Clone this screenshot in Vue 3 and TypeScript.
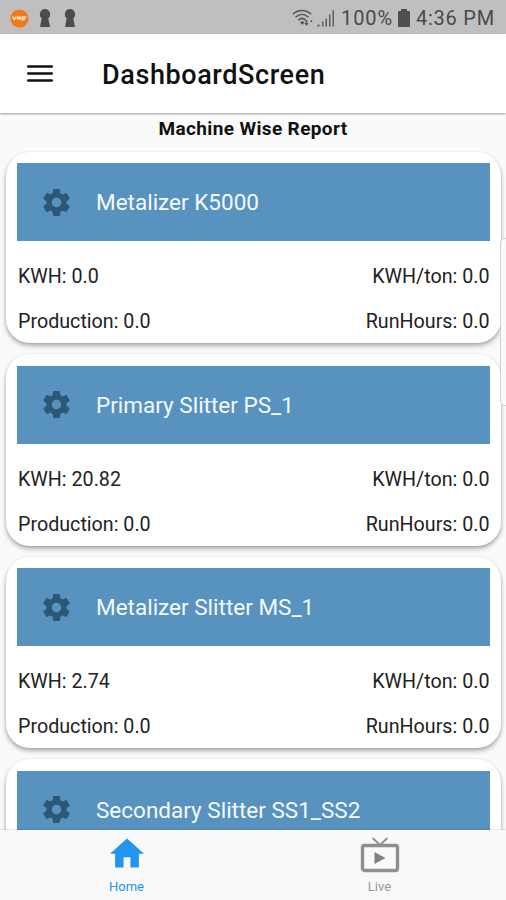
<script setup lang="ts">
interface Readings {
  kwh: string
  perTon: string
  production: string
  runHours: string
}

interface Machine {
  name: string
  readings?: Readings
}

const machines: Machine[] = [
  { name: 'Metalizer K5000', readings: { kwh: '0.0', perTon: '0.0', production: '0.0', runHours: '0.0' } },
  { name: 'Primary Slitter PS_1', readings: { kwh: '20.82', perTon: '0.0', production: '0.0', runHours: '0.0' } },
  { name: 'Metalizer Slitter MS_1', readings: { kwh: '2.74', perTon: '0.0', production: '0.0', runHours: '0.0' } },
  { name: 'Secondary Slitter SS1_SS2' },
]
</script>

<template>
  <div class="screen">
    <div class="status">
      <div class="notices">
        <svg class="vip" viewBox="0 0 20 20">
          <circle cx="10" cy="10" r="9.6" fill="#ee7c1c" />
          <path d="M2.800 8l1.800 3L6.500 8.200M8 11V8.500l2 1.800 1-2.300v3.200M13.200 12.500V8.300h3l-1 2.200h-2" fill="none" stroke="#ffe6d0" stroke-width="1.500" />
        </svg>
        <svg v-for="n in 2" :key="n" class="keyhole" viewBox="0 0 12 18">
          <path d="M6 0a5.300 5.300 0 0 0-3.300 9.300L1 18h10L9.300 9.300A5.300 5.300 0 0 0 6 0z" fill="#4c4c4c" />
        </svg>
      </div>
      <div class="system">
        <svg class="wifi" viewBox="0 0 22 18">
          <g fill="none" stroke="#555" stroke-width="1.500">
            <path d="M.8 5.200C6 .2 14 .2 19.200 5.200" />
            <path d="M3.500 8.300c4-3.700 9-3.700 13 0" />
            <path d="M6.300 11.200c2.300-2.200 5.200-2.200 7.500 0" />
          </g>
          <path d="M8 13.500l2.300-1.500 2.200 1.500-2.200 2.200zM12.500 14h1.200v-3h1.500v3h1.300l-2 3zM18 13l1.300-2.200 1.300 2.200z" fill="#555" />
        </svg>
        <svg class="signal" viewBox="0 0 18 18">
          <path d="M.5 15.500h2V17.500h-2zM5 12.500h1.500v5H5zM8.500 9.500H10v8H8.500zM12 5.500h1.500v12H12zM15.500 1H17v16.500h-1.500z" fill="#606060" />
        </svg>
        <span class="percent">100%</span>
        <svg class="battery" viewBox="0 0 12 18">
          <path d="M3 0h6v2h2q1 0 1 1v14q0 1-1 1H1q-1 0-1-1V3q0-1 1-1h2z" fill="#505050" />
        </svg>
        <span class="clock">4:36 PM</span>
      </div>
    </div>

    <header class="bar">
      <svg class="menu" viewBox="0 0 26 18">
        <path d="M1.200 1.500h23.600M1.200 8.500h23.600M1.200 15.500h23.600" stroke="#111" stroke-width="2.400" stroke-linecap="round" />
      </svg>
      <h1>DashboardScreen</h1>
    </header>

    <main class="content">
      <h2>Machine Wise Report</h2>
      <div class="list">
        <article v-for="m in machines" :key="m.name" class="card">
          <div class="head">
            <svg class="gear" viewBox="2 2 20 20">
              <path
                fill="#2c5875"
                d="M19.430 12.980c.04-.32.07-.64.07-.98s-.03-.66-.07-.98l2.110-1.650c.19-.15.24-.42.12-.64l-2-3.460c-.12-.22-.39-.3-.61-.22l-2.490 1c-.52-.4-1.080-.73-1.690-.98l-.38-2.650C14.460 2.180 14.250 2 14 2h-4c-.25 0-.46.18-.49.42l-.38 2.650c-.61.25-1.170.59-1.690.98l-2.490-1c-.23-.09-.49 0-.61.22l-2 3.460c-.13.22-.07.49.12.64l2.110 1.650c-.04.32-.07.65-.07.98s.03.66.07.98l-2.110 1.650c-.19.15-.24.42-.12.64l2 3.460c.12.22.39.3.61.22l2.490-1c.52.4 1.080.73 1.690.98l.38 2.650c.03.24.24.42.49.42h4c.25 0 .46-.18.49-.42l.38-2.650c.61-.25 1.170-.59 1.690-.98l2.490 1c.23.09.49 0 .61-.22l2-3.460c.12-.22.07-.49-.12-.64l-2.110-1.650zM12 15.500c-1.930 0-3.500-1.570-3.500-3.500s1.570-3.500 3.500-3.500 3.500 1.570 3.500 3.500-1.570 3.500-3.500 3.500z"
              />
            </svg>
            <span class="name">{{ m.name }}</span>
          </div>
          <template v-if="m.readings">
            <div class="row">
              <span>KWH: {{ m.readings.kwh }}</span><span>KWH/ton: {{ m.readings.perTon }}</span>
            </div>
            <div class="row">
              <span>Production: {{ m.readings.production }}</span><span>RunHours: {{ m.readings.runHours }}</span>
            </div>
          </template>
        </article>
      </div>
    </main>

    <nav class="tabs">
      <div class="tab active">
        <svg class="home" viewBox="2 3 20 17"><path d="M10 20v-6h4v6h5v-8h3L12 3 2 12h3v8z" fill="#2095f2" /></svg>
        <span>Home</span>
      </div>
      <div class="tab">
        <svg class="live" viewBox="0 0 40 36">
          <path d="M12.500 1l7.500 7 7.500-7" fill="none" stroke="#8f8f8f" stroke-width="1.800" />
          <rect x="2.500" y="8.500" width="35" height="25" rx="2" fill="none" stroke="#8f8f8f" stroke-width="3.400" />
          <path d="M14.500 15v12L25.500 21z" fill="#808080" />
        </svg>
        <span>Live</span>
      </div>
    </nav>
    <div class="edge-panel"></div>
  </div>
</template>

<style>
body {
  margin: 0;
  overflow: hidden;
}
</style>

<style scoped>
.screen {
  position: relative;
  display: flex;
  flex-direction: column;
  width: 506px;
  height: 900px;
  overflow: hidden;
  background: #fafafa;
  color: #222;
  font-family: Roboto, "Liberation Sans", sans-serif;
  white-space: nowrap;
}
svg {
  display: block;
  flex: none;
}
.status {
  display: flex;
  flex: none;
  justify-content: space-between;
  box-sizing: border-box;
  height: 34px;
  padding: 2px 11px 0 10px;
  background: #bfbfbf;
}
.notices,
.system {
  display: flex;
  align-items: center;
}
.vip { width: 19px; height: 19px; }
.keyhole { width: 12px; height: 18px; margin-left: 10px; }
.keyhole + .keyhole { margin-left: 13px; }
.wifi { width: 22px; height: 18px; }
.signal { width: 18px; height: 18px; margin-left: 3px; }
.percent,
.clock {
  color: #4a4a4a;
  font-size: 20px;
  line-height: 34px;
}
.percent { width: 52px; margin-left: 6px; letter-spacing: 0.9px; }
.battery { width: 12px; height: 18px; margin-left: 5px; }
.clock { width: 79px; margin-left: 6px; letter-spacing: 0.75px; }
.bar {
  position: relative;
  z-index: 1;
  display: flex;
  flex: none;
  align-items: center;
  box-sizing: border-box;
  height: 79px;
  padding: 2px 0 0 27px;
  background: #fff;
  box-shadow: 0 1px 2px rgba(0, 0, 0, 0.38);
}
.menu { width: 26px; height: 18px; margin-top: -1px; }
h1 {
  margin: 1px 0 0 49px;
  color: #111;
  font-size: 27px;
  font-weight: 500;
  line-height: 36px;
  letter-spacing: 0.6px;
}
.content {
  flex: 1;
  min-height: 0;
  overflow: hidden;
}
h2 {
  margin: 0;
  height: 38.500px;
  color: #111;
  font-size: 19px;
  font-weight: 700;
  line-height: 31px;
  letter-spacing: 0.36px;
  text-align: center;
}
.list {
  display: flex;
  flex-direction: column;
  gap: 11px;
  padding: 0 5px 0 6px;
}
.card {
  flex: none;
  box-sizing: border-box;
  height: 191.500px;
  padding: 11.500px 11.500px 0 11px;
  border-radius: 24px;
  background: #fff;
  box-shadow: 0 3px 5px rgba(0, 0, 0, 0.28), 0 1px 3px rgba(0, 0, 0, 0.12);
}
.head {
  display: flex;
  align-items: center;
  height: 78px;
  margin-bottom: 13px;
  padding-left: 26px;
  background: #5892bf;
}
.gear { width: 27px; height: 27px; }
.name {
  margin-left: 26px;
  color: #f4faff;
  font-size: 22.500px;
}
.row {
  display: flex;
  justify-content: space-between;
  height: 45px;
  padding-left: 1px;
  font-size: 19.700px;
  line-height: 45px;
}
.tabs {
  position: relative;
  z-index: 1;
  display: grid;
  grid-template-columns: 1fr 1fr;
  flex: none;
  height: 70px;
  background: #f9f9f9;
  box-shadow: 0 -1px 1px rgba(0, 0, 0, 0.08);
}
.tab {
  display: flex;
  flex-direction: column;
  align-items: center;
  color: #999;
  font-size: 13px;
  line-height: 16px;
}
.tab span { margin-top: auto; margin-bottom: 5px; }
.active { color: #2095f2; }
.home { width: 34px; height: 30px; margin-top: 8px; }
.live { width: 40px; height: 36px; margin-top: 7px; }
.edge-panel {
  position: absolute;
  z-index: 2;
  top: 238px;
  right: -6px;
  width: 10px;
  height: 166px;
  border: 1px solid #d0d0d0;
  border-radius: 5px;
  background: #fafafa;
}
</style>
